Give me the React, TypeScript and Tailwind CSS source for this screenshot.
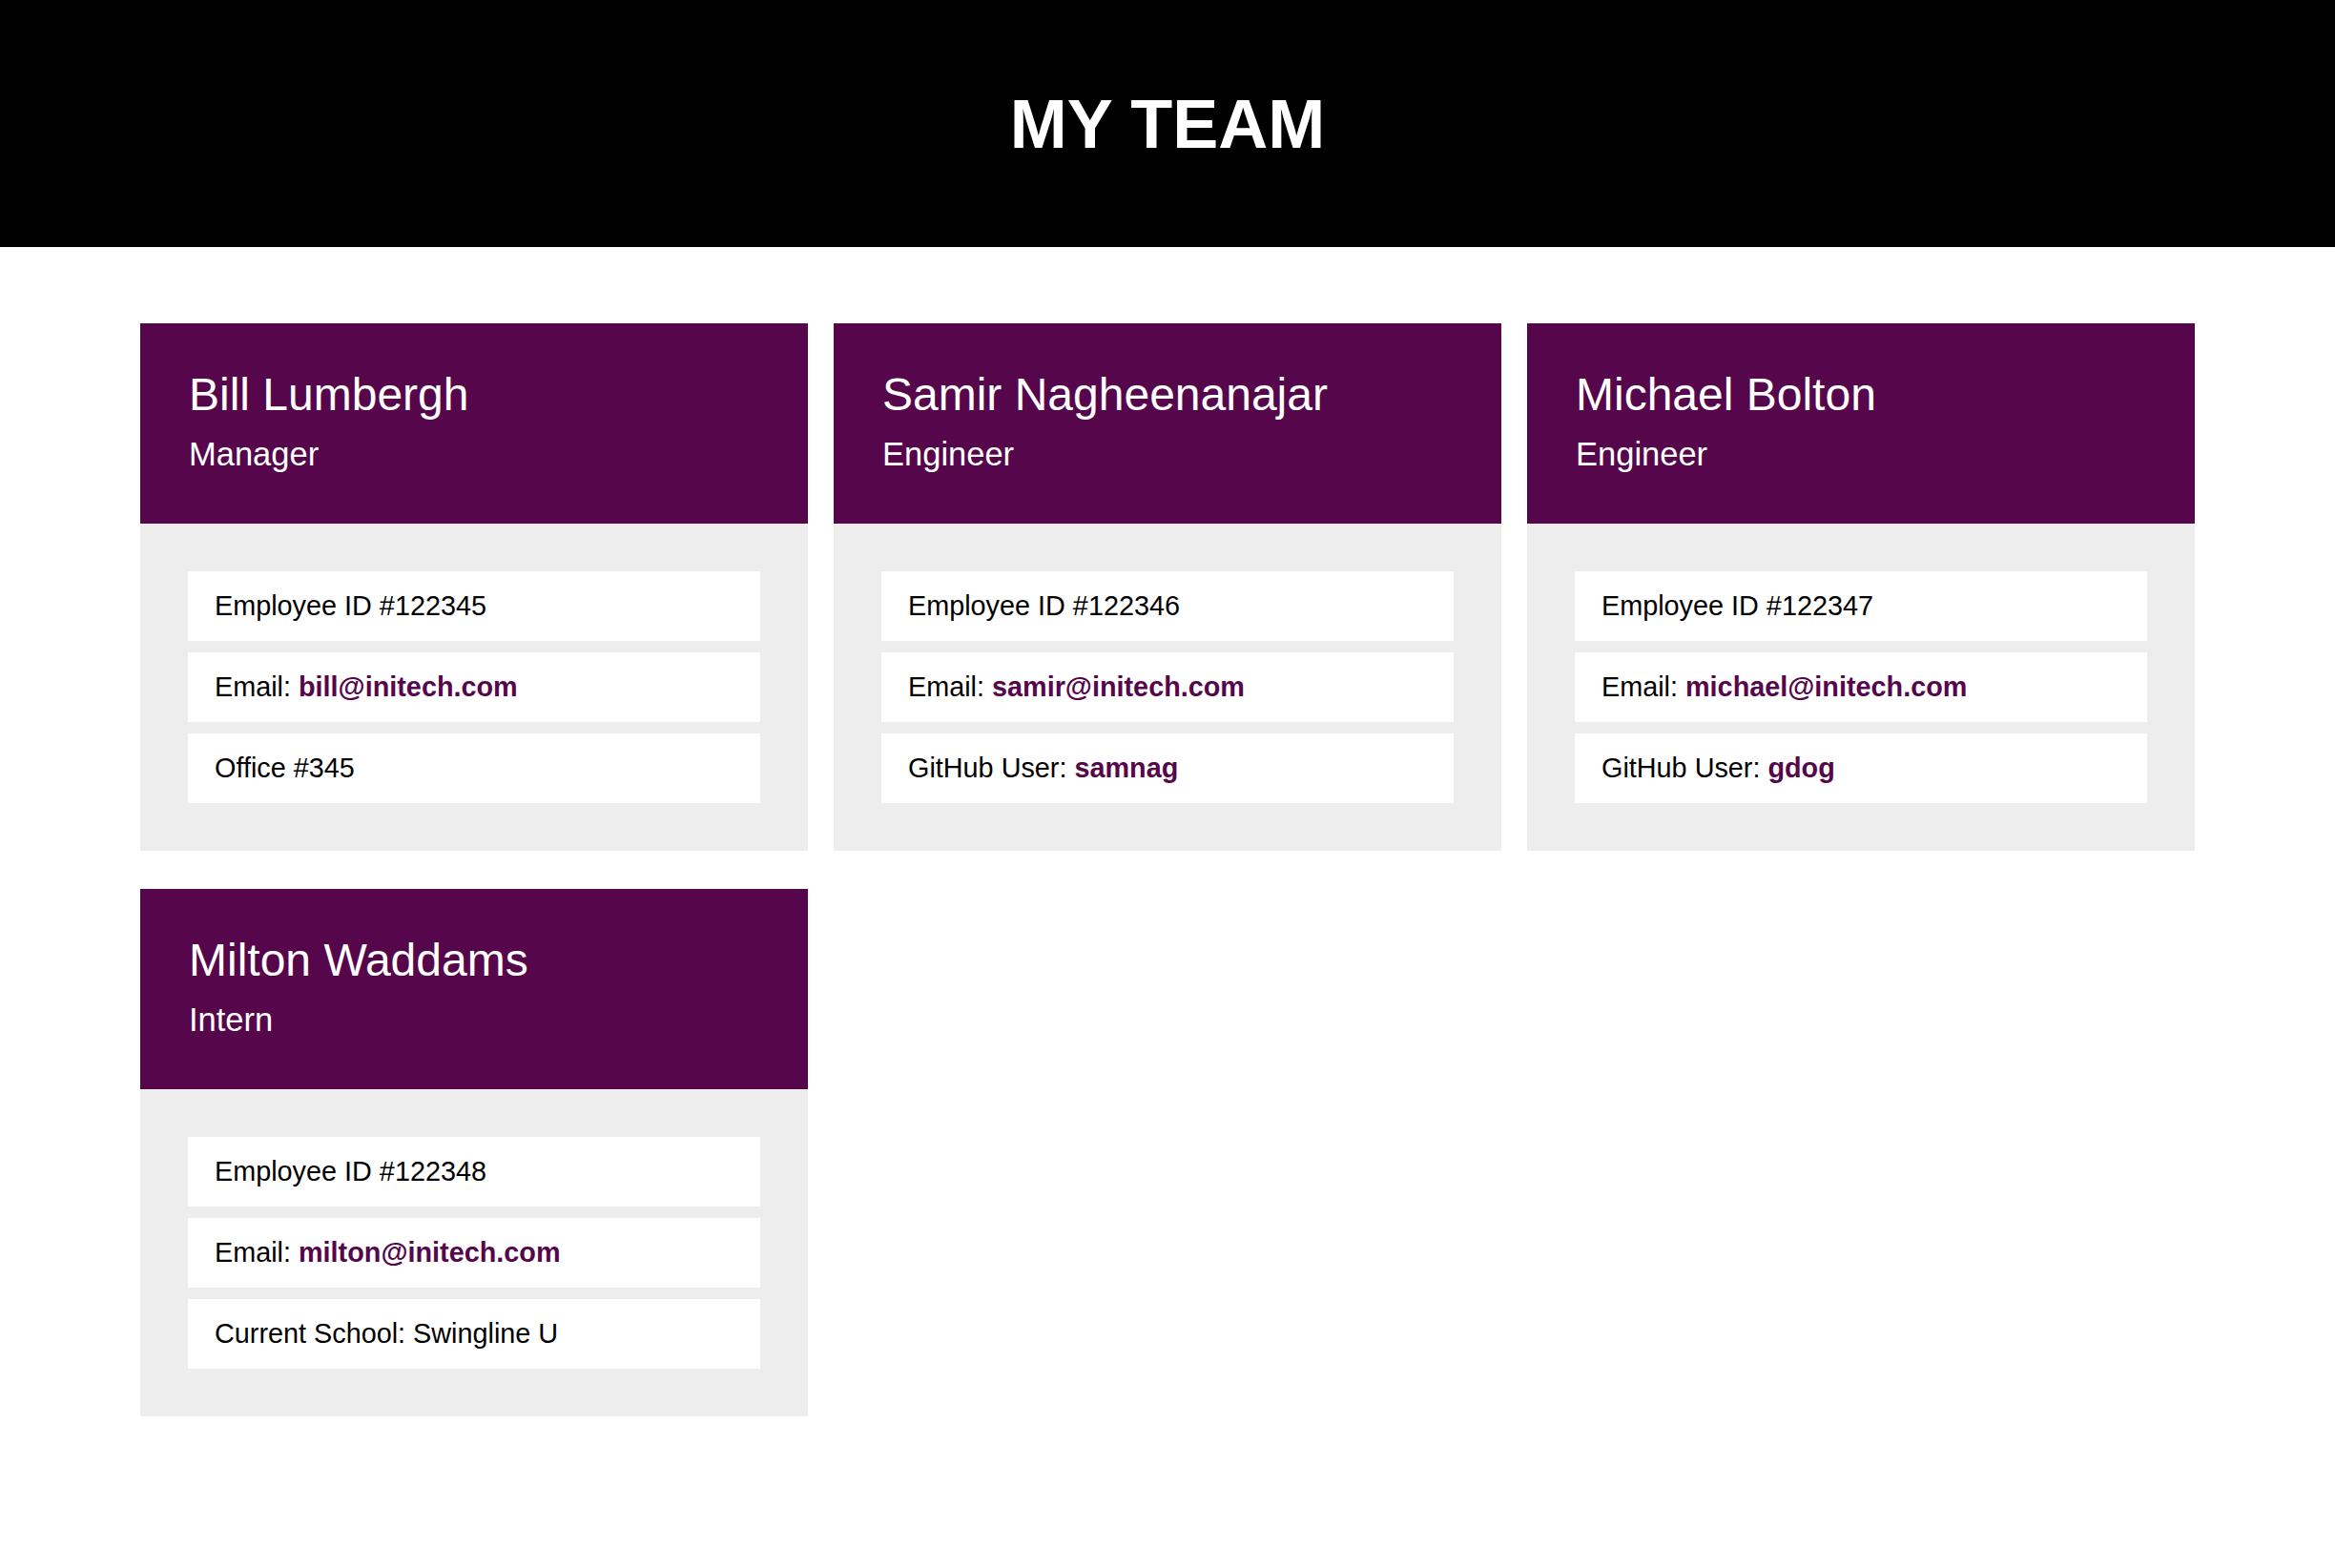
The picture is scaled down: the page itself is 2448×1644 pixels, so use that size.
type Employee = {
    name: string;
    role: string;
    id: string;
    email: string;
    extraLabel: string;
    extraValue: string;
    extraBold?: boolean;
}

const team: Employee[] = [
    { name: "Bill Lumbergh", role: "Manager", id: "122345", email: "bill@initech.com", extraLabel: "Office #", extraValue: "345" },
    { name: "Samir Nagheenanajar", role: "Engineer", id: "122346", email: "samir@initech.com", extraLabel: "GitHub User: ", extraValue: "samnag", extraBold: true },
    { name: "Michael Bolton", role: "Engineer", id: "122347", email: "michael@initech.com", extraLabel: "GitHub User: ", extraValue: "gdog", extraBold: true },
    { name: "Milton Waddams", role: "Intern", id: "122348", email: "milton@initech.com", extraLabel: "Current School: ", extraValue: "Swingline U" },
]

function InfoRow({ children }: { children: React.ReactNode }) {
    return (
        <li className="bg-white px-[28px] py-[15px] leading-[43px] text-[28.8px] text-black">
            {children}
        </li>
    )
}

function EmployeeCard({ employee }: { employee: Employee }) {
    return (
        <div className="flex flex-col">
            <div className="bg-[#56064a] text-white h-[210px] pl-[51px] pt-[46px]">
                <h2 className="text-[48px] leading-[57.6px]">{employee.name}</h2>
                <h3 className="text-[34.5px] leading-[41.4px] mt-[13px]">{employee.role}</h3>
            </div>
            <div className="bg-[#ededed] p-[50px]">
                <ul className="flex flex-col gap-[12px]">
                    <InfoRow>Employee ID #{employee.id}</InfoRow>
                    <InfoRow>
                        Email: <a className="font-bold text-[#56064a]">{employee.email}</a>
                    </InfoRow>
                    <InfoRow>
                        {employee.extraLabel}
                        {employee.extraBold ? (
                            <a className="font-bold text-[#56064a]">{employee.extraValue}</a>
                        ) : (
                            employee.extraValue
                        )}
                    </InfoRow>
                </ul>
            </div>
        </div>
    )
}

export default function App() {
    return (
        <div className="min-h-screen bg-white font-['Liberation_Sans',Arial,sans-serif]">
            <header className="bg-black h-[259px] flex items-center justify-center">
                <h1 className="text-white font-bold text-[72px] leading-none">MY TEAM</h1>
            </header>
            <main className="px-[147px] pt-[80px] pb-[80px]">
                <div className="grid grid-cols-3 gap-x-[27px] gap-y-[40px]">
                    {team.map((employee) => (
                        <EmployeeCard key={employee.id} employee={employee} />
                    ))}
                </div>
            </main>
        </div>
    )
}
